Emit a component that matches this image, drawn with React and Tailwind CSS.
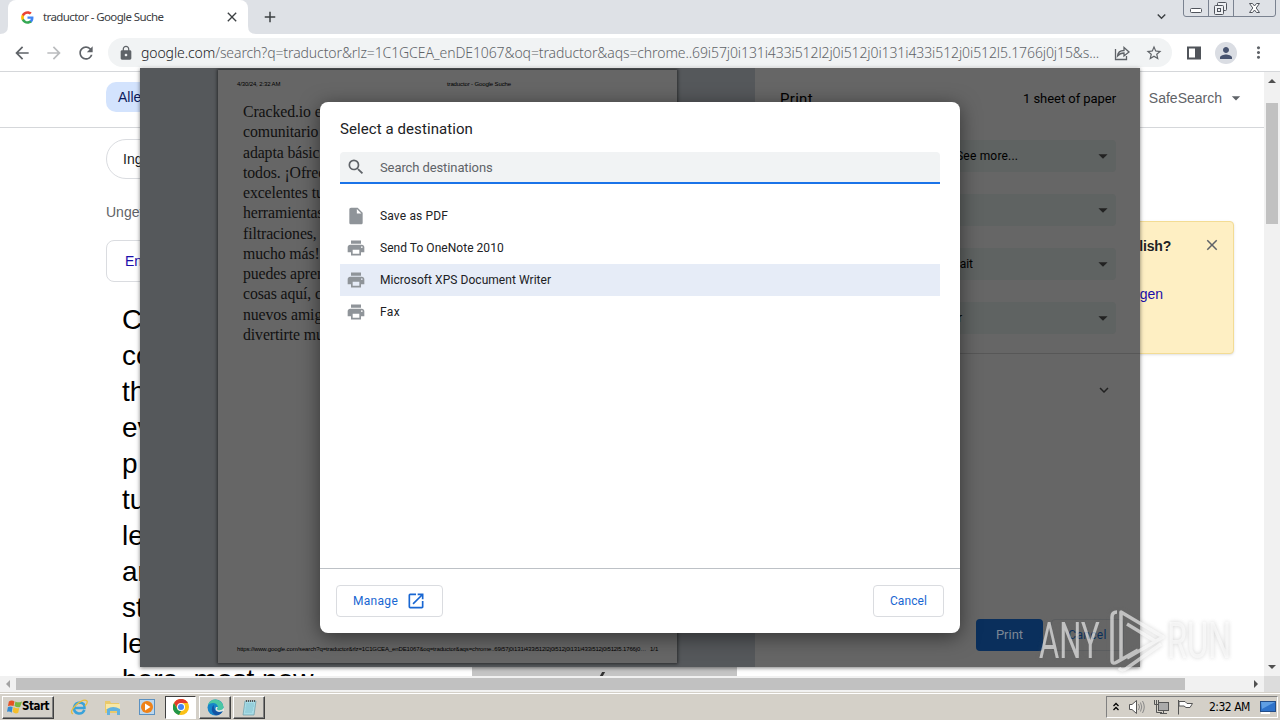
import React from "react";
import { MdPrint, MdSearch, MdOpenInNew, MdInsertDriveFile, MdLock, MdArrowBack, MdArrowForward, MdRefresh, MdStarBorder, MdPerson, MdMoreVert, MdClose, MdExpandMore, MdArrowDropDown, MdAdd } from "react-icons/md";

const bodyLines = ["Cr", "co", "th", "ev", "p", "tu", "le", "an", "st", "le", "here, most now"];
const previewLines = ["Cracked.io es", "comunitario", "adapta básica", "todos. ¡Ofrec", "excelentes tut", "herramientas", "filtraciones,", "mucho más!", "puedes apren", "cosas aquí, c", "nuevos amig", "divertirte mu"];
const destinations = [
  { name: "Save as PDF", pdf: true, track: "tracking-[0.15px]" },
  { name: "Send To OneNote 2010", track: "tracking-[0.04px]" },
  { name: "Microsoft XPS Document Writer", active: true, track: "tracking-[0.05px]" },
  { name: "Fax", track: "tracking-[0.4px]" },
];

function GoogleG() {
  return (
    <svg viewBox="0 0 48 48" className="h-[13px] w-[13px]">
      <path fill="#4285F4" d="M46 24.5c0-1.600-.1-3.100-.4-4.500H24v9h12.400c-.6 3-2.200 5.300-4.700 7v6h7.700C43.600 38 46 31.800 46 24.500z" />
      <path fill="#34A853" d="M24 47c6.200 0 11.500-2.100 15.400-5.600l-7.700-6C29.600 36.800 27 37.700 24 37.700c-6 0-11-4-12.900-9.500H3.200v6.200C7.100 42 15 47 24 47z" />
      <path fill="#FBBC05" d="M11.100 28.200a14 14 0 0 1 0-8.800v-6.200H3.200a23 23 0 0 0 0 21.200z" />
      <path fill="#EA4335" d="M24 9.900c3.400 0 6.400 1.200 8.800 3.400l6.700-6.700C35.500 2.900 30.200 1 24 1 15 1 7.100 6 3.200 13.200l7.900 6.200C13 13.900 18 9.900 24 9.900z" />
    </svg>
  );
}

function TabStrip() {
  return (
    <div className="flex h-[34px] shrink-0 items-start bg-[#dee1e6]">
      <svg className="h-[34px] w-2 shrink-0" viewBox="0 0 8 34"><path d="M0 34Q8 34 8 26V34Z" fill="#fff" /></svg>
      <div className="flex h-[34px] w-[240px] items-center rounded-t-lg bg-white pl-[13px] pr-2">
        <GoogleG />
        <span className="ml-[9px] flex-1 whitespace-nowrap font-['Noto_Sans',sans-serif] text-[11.5px] tracking-[-0.6px] text-[#3c4043]">traductor - Google Suche</span>
        <MdClose className="h-4 w-4 text-[#3c4043]" />
      </div>
      <svg className="h-[34px] w-2 shrink-0" viewBox="0 0 8 34"><path d="M0 26Q0 34 8 34H0Z" fill="#fff" /></svg>
      <MdAdd className="ml-[5px] mt-2 h-[18px] w-[18px] text-[#3c4043]" />
      <MdExpandMore className="ml-auto mt-2 h-[17px] w-[17px] text-[#3c4043]" />
      <svg className="ml-[13px] mr-1 h-[18px] w-[93px]" viewBox="0 0 93 18" fill="none" stroke="#7a8290">
        <path d="M.5 0V14Q.5 16.500 3 16.500H90Q92.500 16.500 92.500 14V0M25.500 0V16.500M50.500 0V16.500" />
        <rect x="7.500" y="8.500" width="11" height="4" rx="1" fill="#fff" stroke="#50545c" />
        <g stroke="#50545c" fill="#eef0f3"><rect x="34.500" y="2.500" width="9" height="8" rx="1" /><rect x="31.500" y="5.500" width="9" height="9" rx="1" /><rect x="34.500" y="8.500" width="3" height="3" /></g>
        <path d="M66.500 3.500h3l2 2.500 2-2.500h3l-3.300 4.500 3.300 4.500h-3l-2-2.500-2 2.500h-3l3.300-4.500z" fill="#fff" stroke="#50545c" />
      </svg>
    </div>
  );
}

function Toolbar() {
  return (
    <div className="flex h-[38px] shrink-0 items-center border-b border-[#d5d7da] bg-white pl-3 text-[#5f6368]">
      <MdArrowBack className="h-5 w-5" />
      <MdArrowForward className="ml-3 h-5 w-5 text-[#babcbe]" />
      <MdRefresh className="ml-3 h-5 w-5" />
      <div className="ml-3 flex h-[29px] w-[1064px] items-center rounded-full bg-[#f1f3f4] pl-[10px] pr-[9px]">
        <MdLock className="h-4 w-4" />
        <span className="ml-[7px] w-[962px] whitespace-nowrap font-['Noto_Sans',sans-serif] text-[14px] font-light tracking-[-0.1px]"><span className="text-[#202124]">google.com</span>/search?q=traductor&amp;rlz=1C1GCEA_enDE1067&amp;oq=traductor&amp;aqs=chrome..69i57j0i131i433i512l2j0i512j0i131i433i512j0i512l5.1766j0j15&amp;s...</span>
        <svg className="ml-[10px] h-[18px] w-[18px] shrink-0" viewBox="0 0 18 18" fill="none" stroke="currentColor" strokeWidth="1.300"><path d="M2.500 5V15.500H13.500V12M4.500 12Q5 6.500 11 6.500V3.500L16 8L11 12V9Q7 9 4.500 12Z" /></svg>
        <MdStarBorder className="ml-[14px] h-[18px] w-[18px] shrink-0" />
      </div>
      <svg className="ml-[14px] h-4 w-4" viewBox="0 0 16 16"><path d="M2 2.500H14V13.500H2Z" fill="none" stroke="#50545a" strokeWidth="2" /><path d="M9 2H15V14H9Z" fill="#50545a" /></svg>
      <div className="ml-[13px] flex h-[22px] w-[22px] items-center justify-center rounded-full bg-[#dadde3] text-[#47536f]"><MdPerson className="h-[18px] w-[18px]" /></div>
      <MdMoreVert className="ml-3 h-[19px] w-[19px]" />
    </div>
  );
}

function Page() {
  return (
    <div className="flex h-[604px] shrink-0 bg-white font-['Liberation_Sans',sans-serif]">
      <div className="flex w-[1264px] flex-col overflow-hidden">
        <div className="flex h-14 shrink-0 items-start justify-between border-b border-[#d5d7da] pl-[106px]">
          <div className="mt-[10px] flex h-[30px] w-20 items-center rounded-[10px] bg-[#d3e3fd] pl-3 text-[14px] text-[#0b1b5e]">Alle</div>
          <div className="mr-[18px] mt-4 flex items-center text-[14px] leading-5 text-[#5f6368]">SafeSearch<MdArrowDropDown className="ml-1 h-5 w-5" /></div>
        </div>
        <div className="flex">
          <div className="flex w-[500px] flex-col pl-[106px]">
            <div className="mt-[11px] flex h-10 w-[120px] items-center rounded-full border border-[#dadce0] pl-4 text-[14px] text-[#202124]">Ing</div>
            <div className="mt-[23px] text-[14px] leading-5 text-[#5f6368]">Ungef</div>
            <div className="mt-[18px] flex h-[42px] w-[200px] items-center rounded-lg border border-[#dadce0] pl-[18px] text-[14px] text-[#1a0dab]">En</div>
            <div className="ml-4 mt-5 whitespace-nowrap text-[28px] leading-9 text-black">
              {bodyLines.map((l, i) => <div key={i}>{l}</div>)}
            </div>
          </div>
          <div className="ml-[434px] mt-[93px] h-[133px] w-[300px] rounded-sm border border-[#f3dc94] bg-[#feefc3] px-4 pt-[14px] shadow">
            <div className="flex justify-end">
              <span className="mr-8 text-[14px] font-bold leading-5 tracking-[-0.2px] text-[#202124]">glish?</span>
              <MdClose className="-mr-1 h-[18px] w-[18px] text-[#5f6368]" />
            </div>
            <div className="mr-[54px] mt-7 text-right text-[14px] leading-5 text-[#1a0dab]">gen</div>
          </div>
        </div>
      </div>
      <div className="flex w-4 flex-col items-center bg-[#f1f1f1]">
        <svg className="h-[31px] w-4" viewBox="0 0 16 31"><path d="M4 11L8 7L12 11Z" fill="#505050" /></svg>
        <div className="h-[121px] w-3 bg-[#c1c1c1]" />
        <svg className="mt-auto h-4 w-4" viewBox="0 0 16 16"><path d="M4 5H12L8 9Z" fill="#505050" /></svg>
      </div>
    </div>
  );
}

function HorizontalScroll() {
  return (
    <div className="flex h-4 shrink-0 items-center bg-[#f1f1f1]">
      <svg className="h-4 w-4" viewBox="0 0 16 16"><path d="M10 4V12L6 8Z" fill="#a3a3a3" /></svg>
      <div className="h-3 w-[1169px] bg-[#c1c1c1]" />
      <svg className="ml-auto h-4 w-4" viewBox="0 0 16 16"><path d="M6 4V12L10 8Z" fill="#505050" /></svg>
      <div className="h-4 w-4 bg-[#dcdcdc]" />
    </div>
  );
}

const raised = "flex h-[23px] items-center justify-center border border-b-[#404040] border-l-white border-r-[#404040] border-t-white shadow-[inset_-1px_-1px_0_#808080]";

function Taskbar() {
  return (
    <div className="flex h-7 shrink-0 items-center border-t border-[#d4d0c8] bg-[#d4d0c8] pt-px font-['DejaVu_Sans_Condensed','DejaVu_Sans',sans-serif] shadow-[inset_0_1px_0_#fff]">
      <div className={raised + " ml-[2px] w-[52px]"}>
        <svg className="h-4 w-[15px] shrink-0" viewBox="0 0 16 16"><path d="M2 2Q5 0 8 2L7 7Q4 6 1 7Z" fill="#e65325" /><path d="M9 2Q12 4 16 2L14 8Q11 9 8 7Z" fill="#79b642" /><path d="M1 8Q4 7 6 8L5 14Q3 12 0 13Z" fill="#348bd2" /><path d="M7 8Q10 10 13 9L12 14Q9 16 6 13Z" fill="#f4be2c" /></svg>
        <span className="text-[11.5px] font-bold tracking-[-0.5px] text-black">Start</span>
      </div>
      <svg className="ml-4 h-[18px] w-[18px]" viewBox="0 0 18 18" fill="none"><path d="M14.500 12Q12.500 16 8.500 15.500Q3.500 14.500 4 9.500Q5 4.500 10 4.500Q15 5 14.500 10H5" stroke="#39a2da" strokeWidth="2.500" /><path d="M3 16Q-1 14 6 7Q14 0 17 3Q18 5 15 8" stroke="#e7bd3e" strokeWidth="1.300" /></svg>
      <svg className="ml-4 h-[18px] w-[18px]" viewBox="0 0 18 18"><path d="M1 3H6L7 5H15V15H1Z" fill="#e9c96b" /><path d="M2 6H16V11H2Z" fill="#f8e7a5" /><path d="M3 11Q9 7 16 11V17H13V13H6V17H3Z" fill="#62b2df" /></svg>
      <svg className="ml-4 h-[18px] w-[18px]" viewBox="0 0 18 18"><rect x="1.500" y="1.500" width="15" height="15" fill="#bcd7ed" stroke="#5b91c1" /><circle cx="9" cy="9" r="6" fill="#ef8218" /><path d="M7 5.500L12.500 9L7 12.500Z" fill="#fff" /></svg>
      <div className="ml-[9px] flex h-[23px] w-[31px] items-center justify-center border border-b-white border-l-[#404040] border-r-white border-t-[#404040] bg-white">
        <svg className="h-4 w-4" viewBox="0 0 16 16"><circle cx="8" cy="8" r="8" fill="#fbc116" /><path d="M1 4A8 8 0 0 1 15 4H8L5 10Z" fill="#e33b2e" /><path d="M1 4L5 11L8 12L6 16A8 8 0 0 1 1 4Z" fill="#229648" /><circle cx="8" cy="8" r="4" fill="#fff" /><circle cx="8" cy="8" r="3" fill="#4285f4" /></svg>
      </div>
      <div className={raised + " ml-[3px] w-8"}>
        <svg className="h-[17px] w-[17px]" viewBox="0 0 17 17"><circle cx="8.500" cy="8.500" r="8" fill="#1685c9" /><path d="M1 6Q3 0 9 .5Q16 2 16.500 8Q16 12 11 11Q9 10 11 8Q10 4 6 4Q3 4 1 6Z" fill="#4ac7a4" /><path d="M7 6Q6 9 9 12Q12 14 16 12Q13 17 8 16Q4 13 5 9Q5 7 7 6Z" fill="#1453a3" /><path d="M11 8Q9 10 11 11Q14 12 17 9V12L12 13Q7 12 9 8Z" fill="#e4e8e2" /></svg>
      </div>
      <div className={raised + " ml-[2px] w-8"}>
        <svg className="h-[17px] w-[17px]" viewBox="0 0 17 17"><path d="M4 2H15L13 16H2Z" fill="#a8dce6" stroke="#6c9ca8" strokeWidth=".7" /><path d="M5 2H15" stroke="#555" strokeWidth="2" strokeDasharray="1 1" /><path d="M5 5H13M5 7H13M4.500 9H12M4.500 11H12M4 13H11" stroke="#6bb3c5" strokeWidth=".6" /></svg>
      </div>
      <div className="ml-auto mr-[2px] flex h-[22px] w-[172px] items-center border border-b-white border-l-[#808080] border-r-white border-t-[#808080] pl-[5px]">
        <svg className="h-3 w-2" viewBox="0 0 8 12" fill="none" stroke="#000" strokeWidth="1.300"><path d="M1.500 5L4 2.500L6.500 5M1.500 9L4 6.500L6.500 9" /></svg>
        <svg className="ml-2 h-4 w-[17px]" viewBox="0 0 17 16" fill="none" stroke="#555"><path d="M1.500 5.500H4L8.500 1.500V14.500L4 10.500H1.500Z" fill="#fff" /><path d="M10.500 5Q12.500 8 10.500 11M12.500 3.500Q15 8 12.500 12.500M14.500 2Q18 8 14.500 14" stroke="#888" /></svg>
        <svg className="ml-2 h-4 w-4" viewBox="0 0 16 16" fill="#fff" stroke="#555"><rect x="5.500" y="3.500" width="10" height="8" fill="#aaa" /><path d="M1.500 1V5.500H5.500V1M3.500 1V5M3.500 6V13.500H9M7 14.500H14M10.500 12V14" fill="none" /></svg>
        <svg className="ml-2 h-4 w-[17px]" viewBox="0 0 17 16" fill="#fff" stroke="#555"><path d="M1.500 1V15.500M2 2.500H8L10 4.500H15.500L13 8.500H9L7 7H2Z" /></svg>
        <span className="ml-[15px] whitespace-nowrap text-[12px] tracking-[-0.5px] text-black">2:32 AM</span>
        <svg className="ml-auto mr-px h-4 w-4 shrink-0" viewBox="0 0 16 16"><rect x=".5" y="2.500" width="15" height="10" fill="#2f73ca" stroke="#234d87" /><path d="M1 3H15L2 10Z" fill="#609fe3" /><path d="M1 14H10" stroke="#fff" strokeWidth="2" /></svg>
      </div>
    </div>
  );
}

function PrintPreview() {
  return (
    <div className="absolute left-[140px] top-[68px] flex h-[599px] w-[1000px] overflow-hidden bg-[#666] shadow-[0_1px_4px_rgba(0,0,0,0.5)]">
      <div className="w-[615px] bg-[#55585b] pl-[78px] pt-[2px]">
        <div className="flex h-[593px] w-[459px] flex-col bg-[#666] shadow-[0_0_3px_1px_rgba(0,0,0,0.5)]">
          <div className="flex pl-[19px] pt-[10px] font-['Liberation_Sans',sans-serif] text-[6px] leading-2 tracking-[-0.13px] text-black">
            <span className="w-[210px]">4/30/24, 2:32 AM</span><span>traductor - Google Suche</span>
          </div>
          <div className="mt-[14px] whitespace-nowrap pl-[25px] font-['Liberation_Serif',serif] text-[15.8px] leading-[20.27px] tracking-[-0.1px] text-[#111]">
            {previewLines.map((l) => <div key={l}>{l}</div>)}
          </div>
          <div className="mb-[10px] mt-auto flex whitespace-nowrap pl-[19px] font-['Liberation_Sans',sans-serif] text-[6px] leading-2 text-black">
            <span className="w-[413px] tracking-[-0.13px]">https://www.google.com/search?q=traductor&amp;rlz=1C1GCEA_enDE1067&amp;oq=traductor&amp;aqs=chrome..69i57j0i131i433i512l2j0i512j0i131i433i512j0i512l5.1766j0…</span><span>1/1</span>
          </div>
        </div>
      </div>
      <div className="flex flex-1 flex-col font-[Roboto,sans-serif] text-[13px] text-black">
        <div className="flex items-center justify-between pl-[25px] pr-6 pt-[21px] leading-5"><span className="text-[15px] tracking-[0.3px]">Print</span><span className="tracking-[-0.05px]">1 sheet of paper</span></div>
        <div className="mt-[31px] flex flex-col gap-[22px] pr-6">
          {["See more...", "", "ait", "r"].map((t, i) => (
            <div key={i} className="flex h-8 items-center rounded-r bg-[#5f6362] pr-[2px]">
              <span className={i === 0 ? "ml-[201px] text-[12px] tracking-[0.2px]" : i === 2 ? "w-[218px] text-right text-[12px]" : "w-[207px] text-right text-[12px]"}>{t}</span>
              <MdArrowDropDown className="ml-auto h-[22px] w-[22px] text-[#222]" />
            </div>
          ))}
        </div>
        <div className="mt-[19px] h-px bg-[#575757]" />
        <MdExpandMore className="ml-auto mr-[27px] mt-[27px] h-[18px] w-[18px] text-[#222]" />
        <div className="mb-4 mr-4 mt-auto flex justify-end gap-2">
          <div className="flex h-8 w-[67px] items-center justify-center rounded bg-[#0a2f5c] text-[#7c8795]">Print</div>
          <div className="flex h-8 w-[73px] items-center justify-center rounded border border-[#5b5d5f] text-[12px] tracking-[0.3px] text-[#0a2f5c]">Cancel</div>
        </div>
      </div>
    </div>
  );
}

function DestinationDialog() {
  return (
    <div className="absolute left-[320px] top-[102px] flex h-[531px] w-[640px] flex-col rounded-lg bg-white font-[Roboto,sans-serif] text-[#202124] shadow-[0_4px_20px_rgba(0,0,0,0.5)]">
      <h1 className="mt-[17px] pl-5 text-[15px] leading-5 tracking-[0.08px]">Select a destination</h1>
      <div className="mx-5 mt-[13px] flex h-8 items-center rounded-t border-b-2 border-[#1a73e8] bg-[#f1f3f4] pl-[6px] text-[13px] tracking-[-0.1px] text-[#5f6368]">
        <MdSearch className="mr-[14px] h-5 w-5" /><span className="pt-[2px]">Search destinations</span>
      </div>
      <div className="mx-5 mt-4">
        {destinations.map((d) => (
          <div key={d.name} className={"flex h-8 items-center pl-[6px] text-[12px] " + d.track + (d.active ? " bg-[#e6ecf7]" : "")}>
            {d.pdf ? <MdInsertDriveFile className="mr-[14px] h-5 w-5 text-[#8f9499]" /> : <MdPrint className="mr-[14px] h-5 w-5 text-[#8f9499]" />}
            {d.name}
          </div>
        ))}
      </div>
      <div className="mt-auto flex h-[65px] items-center justify-between border-t border-[#bdc1c6] px-4 text-[12px] text-[#1967d2]">
        <div className="flex h-8 w-[107px] items-center rounded border border-[#dadce0] pl-4 tracking-[0.3px]">Manage<MdOpenInNew className="ml-2 h-5 w-5" /></div>
        <div className="flex h-8 w-[71px] items-center justify-center rounded border border-[#dadce0] tracking-[0.1px]">Cancel</div>
      </div>
    </div>
  );
}

function Watermark() {
  return (
    <div className="absolute left-[1039px] top-[608px] flex h-[65px] w-[196px] items-center font-[Roboto,sans-serif] text-[50px] leading-none text-white/60 drop-shadow-[0_0_2px_rgba(100,100,100,0.45)]">
      <div className="w-[68px]"><span className="inline-block origin-left scale-x-[0.62]">ANY</span></div>
      <svg className="h-[65px] w-[60px] shrink-0" viewBox="0 0 60 65" fill="none" stroke="currentColor" strokeWidth="3.500" strokeLinejoin="round"><path d="M10 4Q5 4 5 9V52Q5 57 10 54L31 42M14 51V4L56 29L20 50M20 16L48 33M12 60Q15 64 20 60L54 36" /></svg>
      <div><span className="inline-block origin-left scale-x-[0.65]">RUN</span></div>
    </div>
  );
}

export default function App() {
  return (
    <div className="relative flex h-[720px] w-[1280px] flex-col overflow-hidden">
      <TabStrip />
      <Toolbar />
      <Page />
      <HorizontalScroll />
      <Taskbar />
      <div className="absolute left-[472px] top-[667px] h-[9px] w-[265px] bg-[#c5c5c5]"><div className="ml-[129px] mt-[5px] h-1 w-[3px] -skew-x-[30deg] bg-[#333]" /></div>
      <PrintPreview />
      <DestinationDialog />
      <Watermark />
    </div>
  );
}
